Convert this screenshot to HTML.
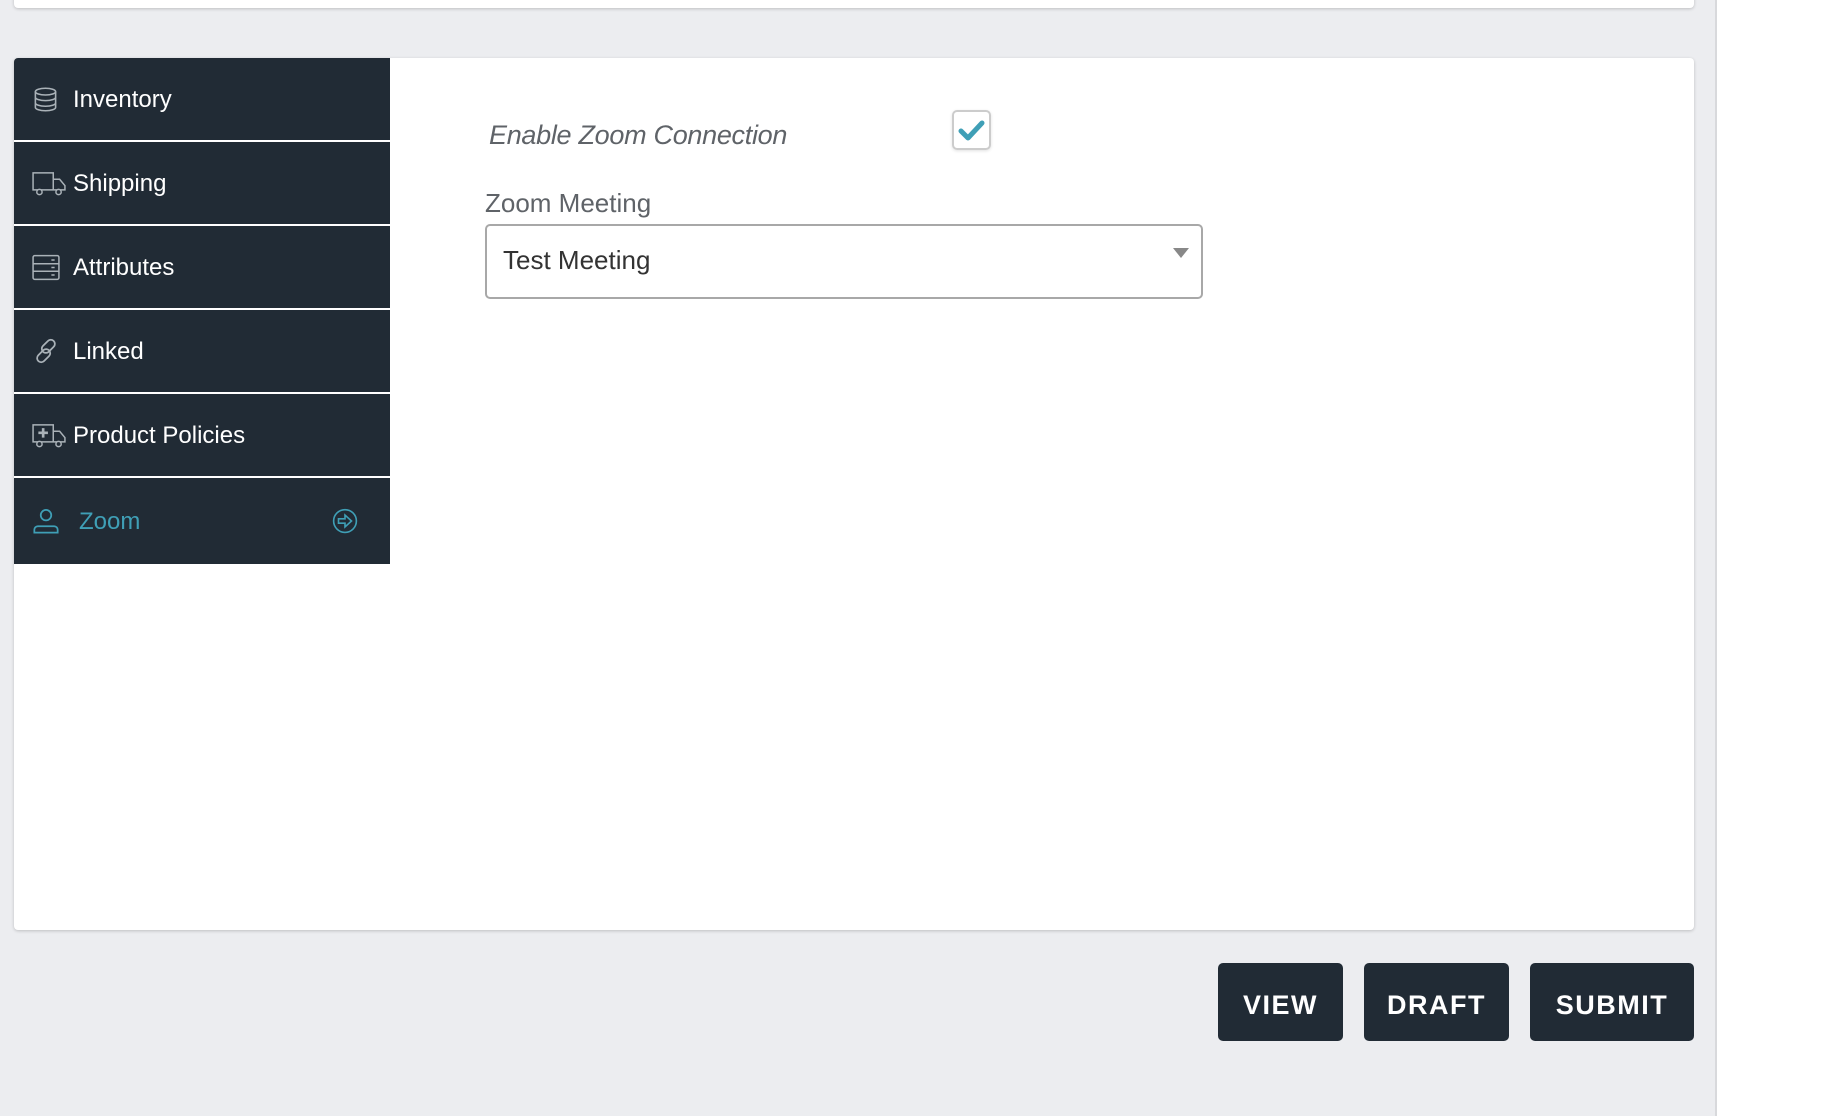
<!DOCTYPE html>
<html><head><meta charset="utf-8"><style>
*{box-sizing:border-box;margin:0;padding:0}
body{width:1822px;height:1116px;background:#ecedf0;font-family:"Liberation Sans",sans-serif;position:relative;overflow:hidden}
.rightw{position:absolute;left:1715px;top:0;width:107px;height:1116px;background:#fff;border-left:2px solid #d8d9dc}
.topcard{position:absolute;left:14px;top:-10px;width:1680px;height:18px;background:#fff;border-radius:4px;box-shadow:0 1px 3px rgba(0,0,0,.2)}
.card{position:absolute;left:14px;top:58px;width:1680px;height:872px;background:#fff;border-radius:4px;box-shadow:0 1px 3px rgba(0,0,0,.2);overflow:hidden}
.side{position:absolute;left:0;top:0;width:376px;height:506px;background:#fff}
.item{position:absolute;left:0;width:376px;background:#212b35;color:#fff;font-size:24px;display:flex;align-items:center}
.item svg{position:absolute;left:18px}
.item span{position:absolute;left:59px;top:calc(50% - 13px)}
.lbl{position:absolute;left:475px;top:62px;font-style:italic;font-size:27px;color:#5f6368;letter-spacing:-0.3px}
.cb{position:absolute;left:938px;top:52px;width:39px;height:40px;border:2px solid #ccc;border-radius:5px;box-shadow:0 1px 3px rgba(0,0,0,.12)}
.lbl2{position:absolute;left:485px;top:130px;font-size:26px;color:#5f6368;position:absolute}
.sel{position:absolute;left:471px;top:166px;width:718px;height:75px;border:2px solid #a8a8a8;border-radius:5px;font-size:26px;color:#333;padding:19px 0 0 16px}
.sel:after{content:"";position:absolute;right:12px;top:22px;border-left:8px solid transparent;border-right:8px solid transparent;border-top:10px solid #888}
.btn{position:absolute;top:963px;height:78px;background:#212b35;color:#fff;font-weight:bold;font-size:27px;letter-spacing:1.5px;border-radius:5px;display:flex;align-items:center;justify-content:center;padding-top:6px}
</style></head><body>
<div class="topcard"></div>
<div class="card">
<div class="side">
<div class="item" style="top:0;height:82px"><svg width="27" height="27" viewBox="0 0 24 24" fill="none" stroke="#aab2b8" stroke-width="1.4"><ellipse cx="12" cy="5" rx="9" ry="3"/><path d="M3 5v14c0 1.7 4 3 9 3s9-1.3 9-3V5M3 10c0 1.7 4 3 9 3s9-1.3 9-3M3 15c0 1.7 4 3 9 3s9-1.3 9-3"/></svg><span>Inventory</span></div>
<div class="item" style="top:84px;height:82px"><svg width="34" height="27" viewBox="0 0 32 24" fill="none" stroke="#aab2b8" stroke-width="1.4"><path d="M1 2h19v16H1zM20 8h6l5 6v4h-11"/><circle cx="7" cy="20" r="2.5" fill="#212b35"/><circle cx="25" cy="20" r="2.5" fill="#212b35"/></svg><span>Shipping</span></div>
<div class="item" style="top:168px;height:82px"><svg width="28" height="27" viewBox="0 0 26 24" fill="none" stroke="#aab2b8" stroke-width="1.4"><rect x="1" y="1" width="24" height="22" rx="1.5"/><path d="M1 8.5h24M1 15.5h24M18 5h3M18 12h3M18 19h3"/></svg><span>Attributes</span></div>
<div class="item" style="top:252px;height:82px"><svg width="28" height="28" viewBox="0 0 24 24" fill="none" stroke="#aab2b8" stroke-width="1.5"><rect x="10.5" y="1.5" width="7" height="13" rx="3.5" transform="rotate(45 14 8)"/><rect x="6.5" y="9.5" width="7" height="13" rx="3.5" transform="rotate(45 10 16)"/></svg><span>Linked</span></div>
<div class="item" style="top:336px;height:82px"><svg width="34" height="27" viewBox="0 0 32 24" fill="none" stroke="#aab2b8" stroke-width="1.4"><path d="M1 2h19v16H1zM20 8h6l5 6v4h-11"/><path d="M10.5 5v9M6 9.5h9" stroke-width="2.5"/><circle cx="7" cy="20" r="2.5" fill="#212b35"/><circle cx="25" cy="20" r="2.5" fill="#212b35"/></svg><span>Product Policies</span></div>
<div class="item" style="top:420px;height:86px;color:#3f9fb6"><svg width="28" height="28" viewBox="0 0 24 24" fill="none" stroke="#3f9fb6" stroke-width="1.5"><circle cx="12" cy="7" r="4.5"/><path d="M2 22v-2.5a3 3 0 013-3h14a3 3 0 013 3V22z"/></svg><span style="left:65px">Zoom</span><svg style="left:318px" width="26" height="26" viewBox="0 0 24 24" fill="none" stroke="#3f9fb6" stroke-width="1.5"><circle cx="12" cy="12" r="10.5"/><path d="M6 10h6V6.5l6 5.5-6 5.5V14H6z"/></svg></div>
</div>
<div class="lbl">Enable Zoom Connection</div>
<div class="cb"><svg width="35" height="36" viewBox="0 0 35 36"><path d="M7 19l7 7L28 11" fill="none" stroke="#3f9fb6" stroke-width="5" stroke-linecap="round" stroke-linejoin="round"/></svg></div>
<div class="lbl2" style="left:471px">Zoom Meeting</div>
<div class="sel">Test Meeting</div>
</div>
<div class="btn" style="left:1218px;width:125px">VIEW</div>
<div class="btn" style="left:1364px;width:145px">DRAFT</div>
<div class="btn" style="left:1530px;width:164px">SUBMIT</div>
<div class="rightw"></div>
</body></html>
